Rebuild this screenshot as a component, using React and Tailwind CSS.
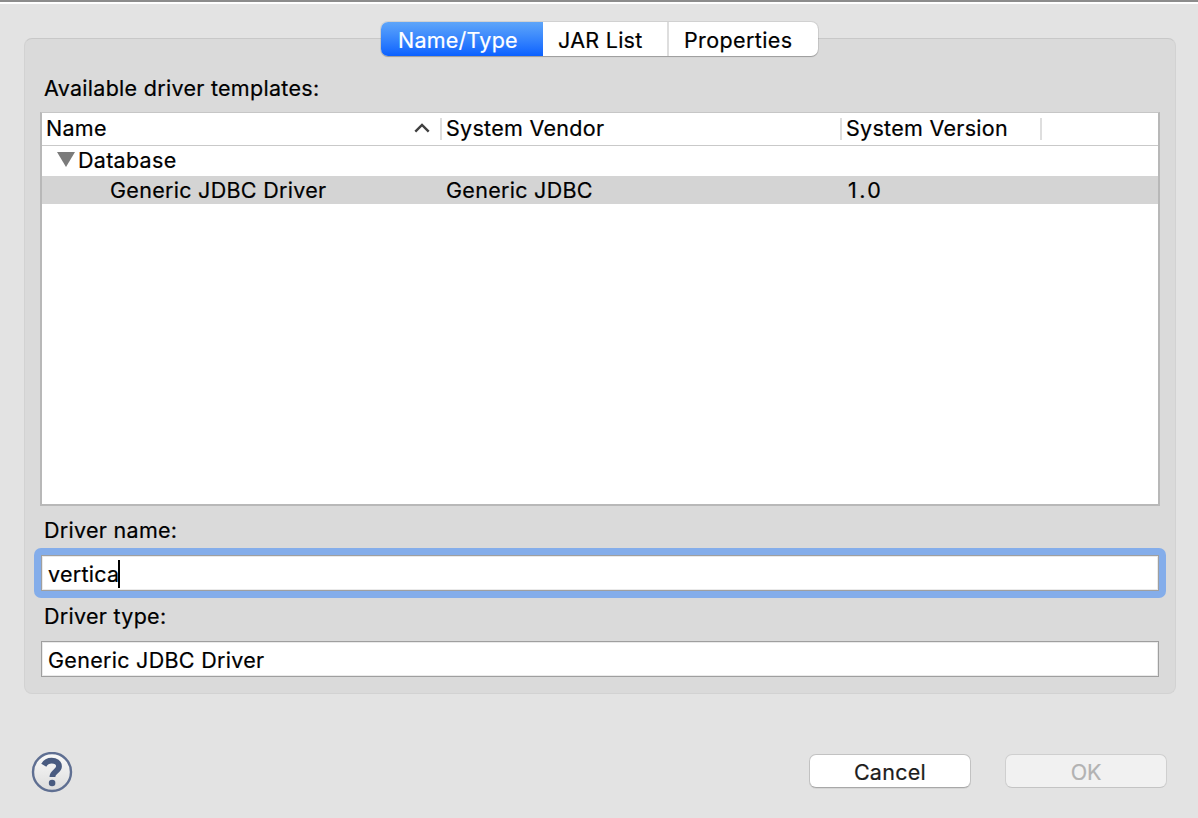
import React from "react";

function Tabs() {
  return (
    <div className="relative z-10 ml-[381px] flex h-[34px] w-[437px] overflow-hidden rounded-[7px] bg-white shadow-[0_1px_1px_rgba(0,0,0,0.22),0_0_0_1px_rgba(0,0,0,0.08)]">
      <button className="h-[34px] w-[162px] bg-linear-to-b from-[#5ea5f9] to-[#0a60ff] pl-[17px] text-left leading-[36px] tracking-[0.24px] text-white">Name/Type</button>
      <button className="h-[34px] w-[124px] pl-[15px] text-left leading-[36px] tracking-[0.28px]">JAR List</button>
      <button className="h-[34px] flex-1 border-l-2 border-[#dedede] pl-[15px] text-left leading-[36px] tracking-[0.38px]">Properties</button>
    </div>
  );
}

function Table() {
  return (
    <div className="mx-[15px] mt-[10px] h-[394px] border-x-2 border-t border-b-2 border-x-[#b8b8b8] border-t-[#c6c6c6] border-b-[#b8b8b8] bg-white">
      <div className="flex h-[33px] items-center border-b border-[#c9c9c9]">
        <div className="flex h-[22px] w-[400px] items-center justify-between border-r-2 border-[#dedede] pr-[10px] pl-[4px]">
          <span className="-mt-[2px]">Name</span>
          <svg width="16" height="10" viewBox="0 0 16 10" fill="none" stroke="#404040" strokeWidth="2.4" className="-mt-[2px]">
            <path d="M1.300 8.700 8 2 14.700 8.700" />
          </svg>
        </div>
        <div className="flex h-[22px] w-[400px] items-center border-r-2 border-[#dedede] pb-[2px] pl-[4px]">System Vendor</div>
        <div className="flex h-[22px] w-[200px] items-center border-r-2 border-[#dedede] pb-[2px] pl-[4px]">System Version</div>
      </div>
      <div className="flex h-[30px] items-center pl-[15px]">
        <svg width="18" height="15" viewBox="0 0 18 15" className="-mt-[3px]">
          <path d="M0 0H18L9 15Z" fill="#7b7b7b" />
        </svg>
        <span className="-mt-[2px] pl-[3px]">Database</span>
      </div>
      <div className="flex h-[28px] items-center bg-[#d4d4d4]">
        <span className="w-[400px] pl-[68px]">Generic JDBC Driver</span>
        <span className="w-[400px] pl-[4px]">Generic JDBC</span>
        <span className="pl-[6px] tracking-[2.4px]">1.0</span>
      </div>
    </div>
  );
}

export default function App() {
  return (
    <div className="flex h-[818px] w-[1198px] flex-col overflow-hidden bg-[#e3e3e3] font-['Inter',sans-serif] text-[21.5px] leading-[28px] tracking-[0.29px] whitespace-nowrap text-black [-webkit-text-stroke:0.2px]">
      <div className="h-[4px] shrink-0 border-b-2 border-white bg-[#8c8c8c]" />
      <div className="pt-[18px]">
        <Tabs />
      </div>
      <div className="-mt-[18px] ml-[24px] h-[656px] w-[1152px] rounded-[8px] border border-[#d2d2d2] border-t-[#c8c8c8] bg-[#dadada]">
        <div className="pt-[35px] pl-[19px]">Available driver templates:</div>
        <Table />
        <div className="mt-[10px] pl-[19px]">Driver name:</div>
        <div className="mt-[4px] ml-[9px] h-[50px] w-[1132px] rounded-[7px] bg-[#84adea] p-[7px]">
          <div className="flex h-[36px] items-center border border-[#9f9f9f] bg-white pt-[2px] pl-[6px] shadow-[inset_-1px_-1px_0_#eaeaea,inset_1px_1px_0_#eaeaea]">
            <span>vertica</span>
            <span className="-ml-px h-[28px] w-[2px] bg-black" />
          </div>
        </div>
        <div className="mt-[4px] pl-[19px]">Driver type:</div>
        <div className="mt-[11px] ml-[16px] flex h-[36px] w-[1118px] items-center border border-[#9f9f9f] bg-white pt-[2px] pl-[6px] shadow-[inset_-1px_-1px_0_#eaeaea,inset_1px_1px_0_#eaeaea]">
          Generic JDBC Driver
        </div>
      </div>
      <div className="mt-[58px] flex items-start pl-[31px]">
        <svg width="42" height="42" viewBox="0 0 42 42" fill="none">
          <defs>
            <linearGradient id="help-face" x1="0" y1="0" x2="0" y2="1">
              <stop stopColor="#fafafa" />
              <stop offset="1" stopColor="#dcdcdc" />
            </linearGradient>
          </defs>
          <circle cx="21" cy="20" r="19" fill="url(#help-face)" stroke="#5f6f92" strokeWidth="2.4" />
          <path d="M12.800 13.200C14.500 10.300 17.300 8.700 20.700 8.700c4 0 7.300 1.800 7.300 5.600 0 5-6.600 5.200-6.600 10.700" stroke="#495b80" strokeWidth="5.800" />
          <circle cx="21.100" cy="31" r="3.300" fill="#495b80" />
        </svg>
        <button className="mt-[2px] ml-[736px] h-[34px] w-[162px] rounded-[7px] border border-[#c2c2c2] border-b-[#a8a8a8] bg-white leading-[34px] text-[#1c1c1c] shadow-[0_1px_0_rgba(0,0,0,0.06)]">Cancel</button>
        <button className="mt-[2px] ml-[34px] h-[34px] w-[162px] rounded-[7px] border border-[#cfcfcf] border-b-[#c4c4c4] bg-[#f1f1f1] leading-[34px] tracking-[-0.3px] text-[#b2b2b2]">OK</button>
      </div>
    </div>
  );
}
